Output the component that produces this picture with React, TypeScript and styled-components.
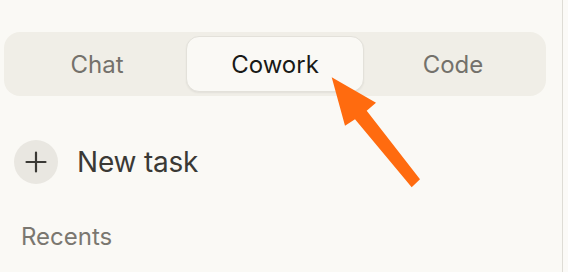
import React, { useState } from 'react';
import styled, { createGlobalStyle } from 'styled-components';

const GlobalStyle = createGlobalStyle`
  html, body {
    margin: 0;
    padding: 0;
    background: #fbfaf7;
    font-family: Inter, "Noto Sans", sans-serif;
  }
`

const tabs = ['Chat', 'Cowork', 'Code']

export default function App() {
  const [active, setActive] = useState('Cowork')

  return (
    <>
      <GlobalStyle />
      <Page>
        <Sidebar>
          <TabBar>
            {tabs.map((t) => (
              <Tab key={t} $active={t === active} onClick={() => setActive(t)}>
                {t}
              </Tab>
            ))}
          </TabBar>

          <NewTask>
            <PlusCircle>
              <svg width="22" height="22" viewBox="0 0 22 22" fill="none">
                <path d="M11 1.5v19M1.5 11h19" stroke="#3a3935" strokeWidth="2.2" strokeLinecap="round" />
              </svg>
            </PlusCircle>
            <NewTaskLabel>New task</NewTaskLabel>
          </NewTask>

          <SectionTitle>Recents</SectionTitle>
        </Sidebar>

        <Arrow width="568" height="272" viewBox="0 0 568 272">
          <polygon
            points="331.7,77.3 376,102.7 366.7,110.7 420,179.3 411.7,187.3 355,119.3 345,125.7"
            fill="#ff6b0f"
          />
        </Arrow>
      </Page>
    </>
  )
}

const Page = styled.div`
  position: relative;
  width: 568px;
  height: 272px;
  overflow: hidden;
  background: #fbfaf7;
`

const Sidebar = styled.aside`
  width: 563px;
  height: 100%;
  box-sizing: border-box;
  border-right: 1px solid #dedcd5;
  background: #faf9f5;
  padding: 32px 16px 0 4px;
  display: flex;
  flex-direction: column;
`

const TabBar = styled.div`
  display: grid;
  grid-template-columns: repeat(3, 1fr);
  height: 64px;
  box-sizing: border-box;
  padding: 4px;
  border-radius: 16px;
  background: #f0eee7;
`

const Tab = styled.button<{ $active: boolean }>`
  border: ${(p) => (p.$active ? '1px solid #e3e1da' : '1px solid transparent')};
  border-radius: 13px;
  background: ${(p) => (p.$active ? '#faf9f5' : 'transparent')};
  box-shadow: ${(p) => (p.$active ? '0 1px 2px rgba(0,0,0,0.06)' : 'none')};
  color: ${(p) => (p.$active ? '#191917' : '#74716b')};
  font-family: Inter, "Noto Sans", sans-serif;
  font-size: 24px;
  font-weight: 400;
  cursor: pointer;
  padding: 0;
`

const NewTask = styled.div`
  display: flex;
  align-items: center;
  gap: 19px;
  margin-top: 44px;
  padding-left: 10px;
`

const PlusCircle = styled.div`
  width: 44px;
  height: 44px;
  border-radius: 50%;
  background: #e9e7e1;
  display: flex;
  align-items: center;
  justify-content: center;
`

const NewTaskLabel = styled.span`
  font-size: 28px;
  color: #3a3935;
  letter-spacing: -0.2px;
`

const SectionTitle = styled.div`
  margin-top: 38px;
  padding-left: 17px;
  font-size: 24px;
  color: #7a7770;
`

const Arrow = styled.svg`
  position: absolute;
  top: 0;
  left: 0;
  pointer-events: none;
`
